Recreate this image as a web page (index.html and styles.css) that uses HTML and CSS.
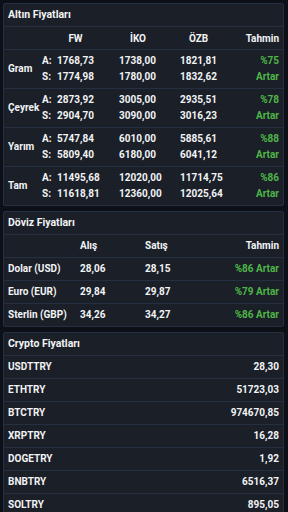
FILE: index.html
```html
<!DOCTYPE html>
<html lang="tr">
<head>
<meta charset="utf-8">
<link rel="stylesheet" href="styles.css">
</head>
<body>
<div class="page">
  <section class="card">
    <div class="title">Altın Fiyatları</div>
    <div class="grow ghead">
      <span></span><span></span>
      <span class="c">FW</span><span class="c">İKO</span><span class="c">ÖZB</span><span class="r">Tahmin</span>
    </div>
    <div class="grow gold">
      <span class="name">Gram</span>
      <span>A:<br>S:</span>
      <span>1768,73<br>1774,98</span>
      <span>1738,00<br>1780,00</span>
      <span>1821,81<br>1832,62</span>
      <span class="r green">%75<br>Artar</span>
    </div>
    <div class="grow gold">
      <span class="name">Çeyrek</span>
      <span>A:<br>S:</span>
      <span>2873,92<br>2904,70</span>
      <span>3005,00<br>3090,00</span>
      <span>2935,51<br>3016,23</span>
      <span class="r green">%78<br>Artar</span>
    </div>
    <div class="grow gold">
      <span class="name">Yarım</span>
      <span>A:<br>S:</span>
      <span>5747,84<br>5809,40</span>
      <span>6010,00<br>6180,00</span>
      <span>5885,61<br>6041,12</span>
      <span class="r green">%88<br>Artar</span>
    </div>
    <div class="grow gold last">
      <span class="name">Tam</span>
      <span>A:<br>S:</span>
      <span>11495,68<br>11618,81</span>
      <span>12020,00<br>12360,00</span>
      <span>11714,75<br>12025,64</span>
      <span class="r green">%86<br>Artar</span>
    </div>
  </section>

  <section class="card">
    <div class="title">Döviz Fiyatları</div>
    <div class="drow"><span></span><span>Alış</span><span>Satış</span><span class="r">Tahmin</span></div>
    <div class="drow"><span>Dolar (USD)</span><span>28,06</span><span>28,15</span><span class="r green">%86 Artar</span></div>
    <div class="drow"><span>Euro (EUR)</span><span>29,84</span><span>29,87</span><span class="r green">%79 Artar</span></div>
    <div class="drow last"><span>Sterlin (GBP)</span><span>34,26</span><span>34,27</span><span class="r green">%86 Artar</span></div>
  </section>

  <section class="card">
    <div class="title">Crypto Fiyatları</div>
    <div class="crow"><span>USDTTRY</span><span>28,30</span></div>
    <div class="crow"><span>ETHTRY</span><span>51723,03</span></div>
    <div class="crow"><span>BTCTRY</span><span>974670,85</span></div>
    <div class="crow"><span>XRPTRY</span><span>16,28</span></div>
    <div class="crow"><span>DOGETRY</span><span>1,92</span></div>
    <div class="crow"><span>BNBTRY</span><span>6516,37</span></div>
    <div class="crow"><span>SOLTRY</span><span>895,05</span></div>
  </section>
</div>
</body>
</html>
```

FILE: styles.css
```css
html, body {
  margin: 0;
  padding: 0;
  background: #0d1117;
}
body {
  font-family: Roboto, "Liberation Sans", sans-serif;
  font-weight: 700;
  font-size: 10px;
  color: #f2f3f5;
  height: 512px;
  overflow: hidden;
}
.page {
  padding: 3px 4px 0 3px;
  display: flex;
  flex-direction: column;
  gap: 5px;
}
.card {
  background: #1a1f28;
  border: 1px solid #243042;
  border-radius: 2px;
}
.title {
  height: 22px;
  line-height: 22px;
  padding: 0 4px;
  border-bottom: 1px solid #243042;
  font-size: 10.5px;
}
.grow {
  display: grid;
  grid-template-columns: 34px 15px 62px 61px 1fr 50px;
  padding: 0 4px;
  border-bottom: 1px solid #243042;
  align-items: center;
}
.ghead {
  height: 22px;
}
.gold {
  height: 38px;
  line-height: 16.5px;
}
.gold.last { border-bottom: none; }
.c { text-align: center; }
.ghead .c { justify-self: start; width: 37px; }
.ghead .c:nth-child(4) { width: 38px; }
.r { text-align: right; }
.green { color: #4fb548; }
.drow {
  display: grid;
  grid-template-columns: 72px 65px 1fr 80px;
  height: 22px;
  line-height: 22px;
  padding: 0 4px;
  border-bottom: 1px solid #243042;
}
.drow.last { border-bottom: none; }
.crow {
  display: flex;
  justify-content: space-between;
  height: 22px;
  line-height: 22px;
  padding: 0 4px;
  border-bottom: 1px solid #243042;
}
```
